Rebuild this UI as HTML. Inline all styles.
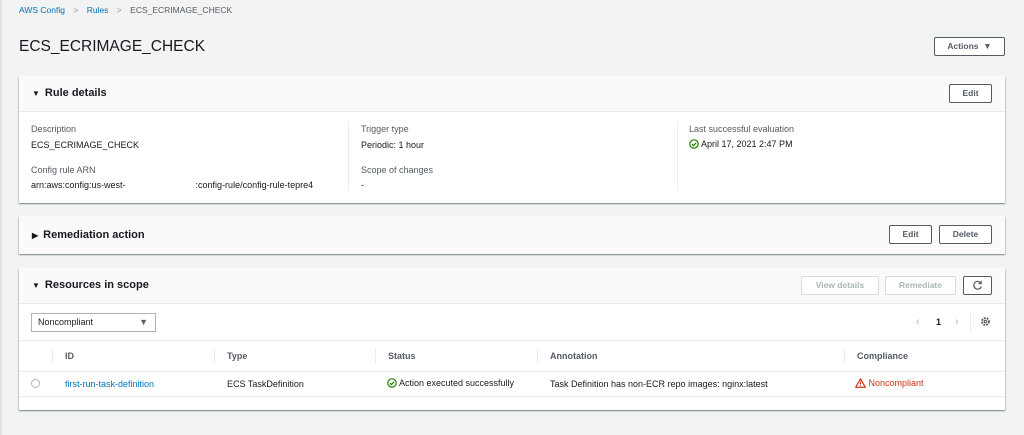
<!DOCTYPE html><html><head><style>
*{box-sizing:border-box;margin:0;padding:0}
body{width:1024px;height:435px;background:#f2f3f3;font-family:"Liberation Sans",Arial,sans-serif;font-size:9px;color:#16191f;position:relative;overflow:hidden}
.a{position:absolute}
.link{color:#0073bb}
.panel{position:absolute;left:19px;width:986px;background:#fff;box-shadow:0 1px 1px rgba(0,28,36,.3),1px 1px 1px rgba(0,28,36,.15),-1px 1px 1px rgba(0,28,36,.15)}
.hd{position:absolute;left:0;top:0;width:100%;background:#fafafa;border-bottom:1px solid #eaeded}
.ttl{position:absolute;left:13px;font-size:11px;font-weight:bold}
.tri{font-size:8px;margin-right:5px}
.btn{position:absolute;border:1px solid #545b64;background:#fff;font-weight:bold;color:#545b64;font-size:8.5px;text-align:center;border-radius:2px}
.dis{border-color:#d5dbdb;color:#aab7b8}
.lbl{color:#545b64}
.th{font-weight:bold;color:#545b64}
.sep{position:absolute;width:1px;background:#eaeded}
svg{vertical-align:-2px}
</style></head><body>
<div class="a" style="left:0;top:0;width:2px;height:435px;background:#e0e2e2"></div>
<div class="a" style="left:19px;top:5px;font-size:8.5px"><span class="link">AWS Config</span> <span style="color:#879596;margin:0 6px">&gt;</span> <span class="link">Rules</span> <span style="color:#879596;margin:0 6px">&gt;</span> <span style="color:#545b64">ECS_ECRIMAGE_CHECK</span></div>
<div class="a" style="left:19px;top:38px;font-size:15.5px">ECS_ECRIMAGE_CHECK</div>
<div class="btn" style="left:934px;top:37px;width:71px;height:19px;line-height:17px">Actions &nbsp;▼</div>

<div class="panel" style="top:76px;height:127px">
 <div class="hd" style="height:36px"></div>
 <div class="ttl" style="top:11px"><span class="tri">▼</span>Rule details</div>
 <div class="btn" style="left:930px;top:8px;width:43px;height:19px;line-height:17px">Edit</div>
 <div class="a lbl" style="left:12px;top:48px">Description</div>
 <div class="a" style="left:12px;top:64px">ECS_ECRIMAGE_CHECK</div>
 <div class="a lbl" style="left:12px;top:89px">Config rule ARN</div>
 <div class="a" style="left:12px;top:104px">arn:aws:config:us-west-<span style="display:inline-block;width:70px"></span>:config-rule/config-rule-tepre4</div>
 <div class="sep" style="left:329px;top:46px;height:68px"></div>
 <div class="a lbl" style="left:342px;top:48px">Trigger type</div>
 <div class="a" style="left:342px;top:64px">Periodic: 1 hour</div>
 <div class="a lbl" style="left:342px;top:89px">Scope of changes</div>
 <div class="a" style="left:342px;top:104px">-</div>
 <div class="sep" style="left:658px;top:46px;height:68px"></div>
 <div class="a lbl" style="left:670px;top:48px">Last successful evaluation</div>
 <div class="a" style="left:670px;top:63px"><svg width="10" height="10" viewBox="0 0 10 10"><circle cx="5" cy="5" r="4.2" fill="none" stroke="#1d8102" stroke-width="1.2"/><path d="M3 5.2l1.4 1.4L7.1 3.8" fill="none" stroke="#1d8102" stroke-width="1.2"/></svg> April 17, 2021 2:47 PM</div>
</div>

<div class="panel" style="top:216px;height:38px">
 <div class="hd" style="height:38px;border:none"></div>
 <div class="ttl" style="top:13px"><span class="tri">▶</span>Remediation action</div>
 <div class="btn" style="left:870px;top:9px;width:43px;height:19px;line-height:17px">Edit</div>
 <div class="btn" style="left:920px;top:9px;width:53px;height:19px;line-height:17px">Delete</div>
</div>

<div class="panel" style="top:268px;height:142px">
 <div class="hd" style="height:36px"></div>
 <div class="ttl" style="top:11px"><span class="tri">▼</span>Resources in scope</div>
 <div class="btn dis" style="left:782px;top:8px;width:78px;height:19px;line-height:17px">View details</div>
 <div class="btn dis" style="left:866px;top:8px;width:71px;height:19px;line-height:17px">Remediate</div>
 <div class="btn" style="left:944px;top:8px;width:29px;height:19px;padding-top:3px"><svg width="11" height="11" viewBox="0 0 12 12"><path d="M9.5 3.2A4.2 4.2 0 1 0 10.2 7" fill="none" stroke="#545b64" stroke-width="1.3"/><path d="M10 0.8v3H7" fill="none" stroke="#545b64" stroke-width="1.3"/></svg></div>
 <div class="a" style="left:12px;top:45px;width:125px;height:19px;border:1px solid #aab7b8;line-height:17px;padding-left:6px">Noncompliant<span style="position:absolute;right:7px;color:#545b64">▼</span></div>
 <div class="a" style="left:897px;top:48px;color:#aab7b8;font-size:11px">‹</div>
 <div class="a" style="left:917px;top:49px;font-weight:bold">1</div>
 <div class="a" style="left:936px;top:48px;color:#aab7b8;font-size:11px">›</div>
 <div class="sep" style="left:951px;top:44px;height:19px"></div>
 <div class="a" style="left:961px;top:48px"><svg width="11" height="11" viewBox="0 0 12 12"><circle cx="6" cy="6" r="3.8" fill="none" stroke="#545b64" stroke-width="2" stroke-dasharray="2 1.2"/><circle cx="6" cy="6" r="1.4" fill="none" stroke="#545b64" stroke-width="1.2"/></svg></div>
 <div class="a" style="left:0;top:72px;width:986px;height:32px;border-top:1px solid #eaeded;border-bottom:1px solid #eaeded"></div>
 <div class="sep" style="left:33px;top:80px;height:16px"></div>
 <div class="sep" style="left:195px;top:80px;height:16px"></div>
 <div class="sep" style="left:356px;top:80px;height:16px"></div>
 <div class="sep" style="left:518px;top:80px;height:16px"></div>
 <div class="sep" style="left:825px;top:80px;height:16px"></div>
 <div class="a th" style="left:46px;top:83px">ID</div>
 <div class="a th" style="left:208px;top:83px">Type</div>
 <div class="a th" style="left:369px;top:83px">Status</div>
 <div class="a th" style="left:531px;top:83px">Annotation</div>
 <div class="a th" style="left:838px;top:83px">Compliance</div>
 <div class="a" style="left:0;top:104px;width:986px;height:25px;border-bottom:1px solid #eaeded"></div>
 <div class="a" style="left:12px;top:111px;width:9px;height:9px;border:1px solid #aab7b8;border-radius:50%"></div>
 <div class="a link" style="left:46px;top:111px">first-run-task-definition</div>
 <div class="a" style="left:208px;top:111px">ECS TaskDefinition</div>
 <div class="a" style="left:368px;top:110px"><svg width="10" height="10" viewBox="0 0 10 10"><circle cx="5" cy="5" r="4.2" fill="none" stroke="#1d8102" stroke-width="1.2"/><path d="M3 5.2l1.4 1.4L7.1 3.8" fill="none" stroke="#1d8102" stroke-width="1.2"/></svg> Action executed successfully</div>
 <div class="a" style="left:531px;top:111px">Task Definition has non-ECR repo images: nginx:latest</div>
 <div class="a" style="left:836px;top:110px;color:#d13212"><svg width="11" height="10" viewBox="0 0 11 10"><path d="M5.5 0.8L10.3 9.3H0.7Z" fill="none" stroke="#d13212" stroke-width="1.2" stroke-linejoin="round"/><path d="M5.5 3.6v3M5.5 7.4v1" stroke="#d13212" stroke-width="1.1"/></svg> Noncompliant</div>
</div>
</body></html>
